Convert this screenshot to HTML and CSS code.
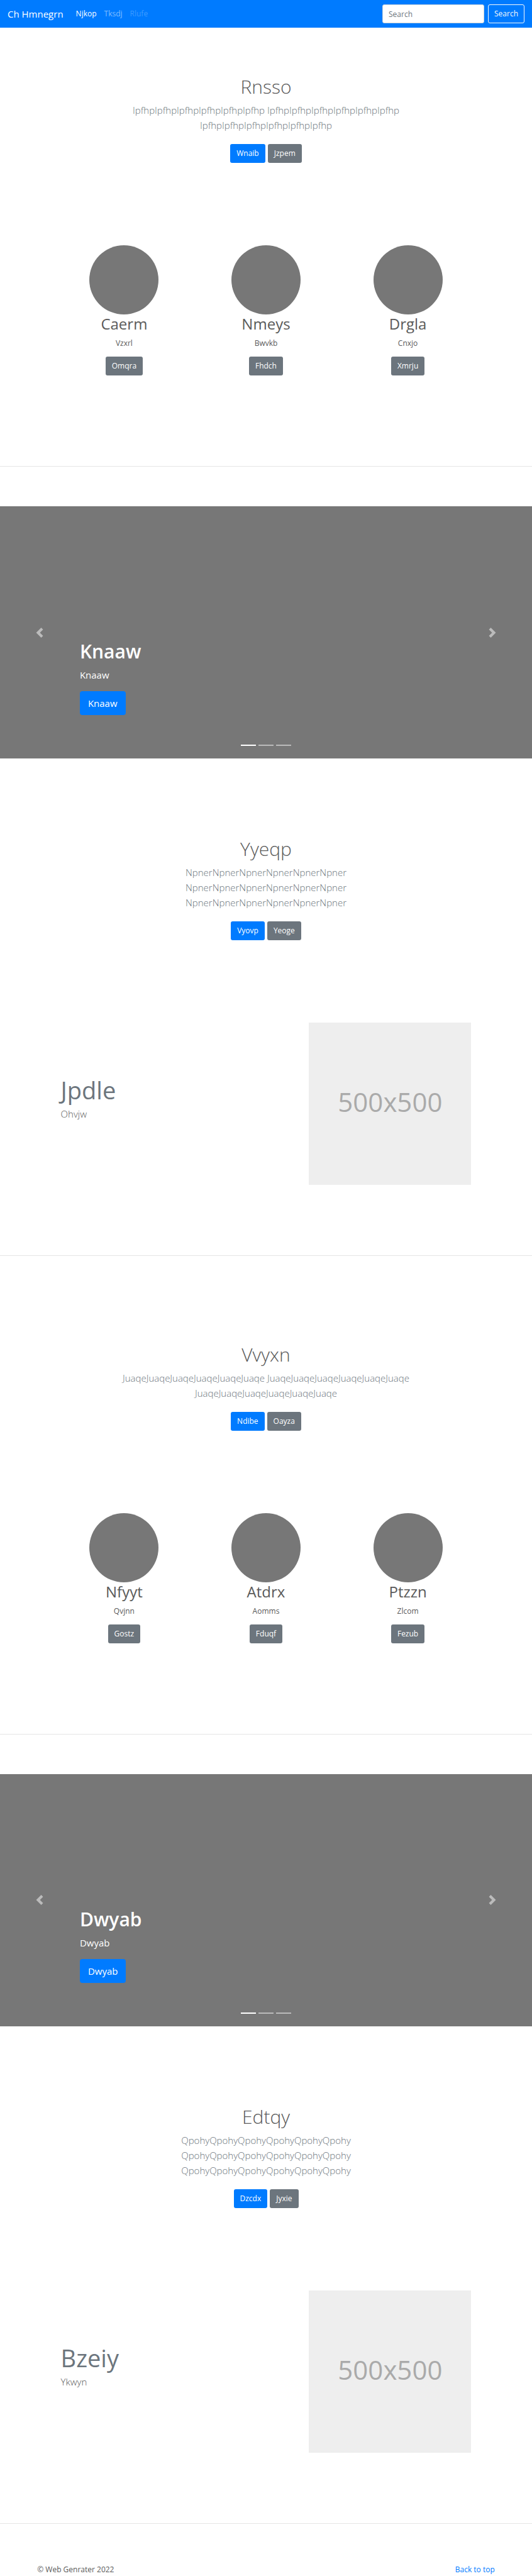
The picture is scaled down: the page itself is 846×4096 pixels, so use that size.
FILE: index.html
```html
<!DOCTYPE html>
<html lang="en">
<head>
<meta charset="utf-8">
<meta name="viewport" content="width=device-width, initial-scale=1">
<title>Ch Hmnegrn</title>
<link rel="stylesheet" href="styles.css">
</head>
<body id="top">
<header class="navbar">
  <a class="brand" href="#">Ch Hmnegrn</a>
  <nav class="nav">
    <a class="nav-link active" href="#">Njkop</a>
    <a class="nav-link" href="#">Tksdj</a>
    <a class="nav-link disabled" href="#">Rlufe</a>
  </nav>
  <form class="search">
    <input class="search-input" type="search" placeholder="Search" aria-label="Search">
    <button class="btn btn-outline" type="button">Search</button>
  </form>
</header>
<main>
  <section class="intro">
    <h1 class="intro-title">Rnsso</h1>
    <p class="lead">IpfhpIpfhpIpfhpIpfhpIpfhpIpfhp IpfhpIpfhpIpfhpIpfhpIpfhpIpfhp IpfhpIpfhpIpfhpIpfhpIpfhpIpfhp</p>
    <div class="actions"><a class="btn btn-primary" href="#">Wnaib</a><a class="btn btn-secondary" href="#">Jzpem</a></div>
  </section>
  <section class="team">
    <article class="member"><div class="avatar"></div><h2 class="member-name">Caerm</h2><p class="member-text">Vzxrl</p><a class="btn btn-secondary" href="#">Omqra</a></article>
    <article class="member"><div class="avatar"></div><h2 class="member-name">Nmeys</h2><p class="member-text">Bwvkb</p><a class="btn btn-secondary" href="#">Fhdch</a></article>
    <article class="member"><div class="avatar"></div><h2 class="member-name">Drgla</h2><p class="member-text">Cnxjo</p><a class="btn btn-secondary" href="#">Xmrju</a></article>
  </section>
  <hr class="divider">
  <section class="carousel">
    <div class="caption">
      <h2 class="caption-title">Knaaw</h2>
      <p class="caption-text">Knaaw</p>
      <a class="btn btn-primary btn-large" href="#">Knaaw</a>
    </div>
    <button class="control control-prev" type="button" aria-label="Previous"><svg class="chevron" viewBox="0 0 8 8"><path d="M5.250 0l-4 4 4 4 1.500-1.500L4.250 4l2.500-2.500L5.250 0z"/></svg></button>
    <button class="control control-next" type="button" aria-label="Next"><svg class="chevron" viewBox="0 0 8 8"><path d="M2.750 0l-1.500 1.500L3.750 4l-2.500 2.500L2.750 8l4-4-4-4z"/></svg></button>
    <div class="indicators"><span class="indicator current"></span><span class="indicator"></span><span class="indicator"></span></div>
  </section>
  <section class="intro after-carousel">
    <h1 class="intro-title">Yyeqp</h1>
    <p class="lead">NpnerNpnerNpnerNpnerNpnerNpner NpnerNpnerNpnerNpnerNpnerNpner NpnerNpnerNpnerNpnerNpnerNpner</p>
    <div class="actions"><a class="btn btn-primary" href="#">Vyovp</a><a class="btn btn-secondary" href="#">Yeoge</a></div>
  </section>
  <section class="feature">
    <div class="feature-copy"><h2 class="feature-title">Jpdle</h2><p class="feature-text">Ohvjw</p></div>
    <div class="feature-media"><div class="placeholder">500x500</div></div>
  </section>
  <hr class="divider">
  <section class="intro">
    <h1 class="intro-title">Vvyxn</h1>
    <p class="lead">JuaqeJuaqeJuaqeJuaqeJuaqeJuaqe JuaqeJuaqeJuaqeJuaqeJuaqeJuaqe JuaqeJuaqeJuaqeJuaqeJuaqeJuaqe</p>
    <div class="actions"><a class="btn btn-primary" href="#">Ndibe</a><a class="btn btn-secondary" href="#">Oayza</a></div>
  </section>
  <section class="team">
    <article class="member"><div class="avatar"></div><h2 class="member-name">Nfyyt</h2><p class="member-text">Qvjnn</p><a class="btn btn-secondary" href="#">Gostz</a></article>
    <article class="member"><div class="avatar"></div><h2 class="member-name">Atdrx</h2><p class="member-text">Aomms</p><a class="btn btn-secondary" href="#">Fduqf</a></article>
    <article class="member"><div class="avatar"></div><h2 class="member-name">Ptzzn</h2><p class="member-text">Zlcom</p><a class="btn btn-secondary" href="#">Fezub</a></article>
  </section>
  <hr class="divider">
  <section class="carousel">
    <div class="caption">
      <h2 class="caption-title">Dwyab</h2>
      <p class="caption-text">Dwyab</p>
      <a class="btn btn-primary btn-large" href="#">Dwyab</a>
    </div>
    <button class="control control-prev" type="button" aria-label="Previous"><svg class="chevron" viewBox="0 0 8 8"><path d="M5.250 0l-4 4 4 4 1.500-1.500L4.250 4l2.500-2.500L5.250 0z"/></svg></button>
    <button class="control control-next" type="button" aria-label="Next"><svg class="chevron" viewBox="0 0 8 8"><path d="M2.750 0l-1.500 1.500L3.750 4l-2.500 2.500L2.750 8l4-4-4-4z"/></svg></button>
    <div class="indicators"><span class="indicator current"></span><span class="indicator"></span><span class="indicator"></span></div>
  </section>
  <section class="intro after-carousel">
    <h1 class="intro-title">Edtqy</h1>
    <p class="lead">QpohyQpohyQpohyQpohyQpohyQpohy QpohyQpohyQpohyQpohyQpohyQpohy QpohyQpohyQpohyQpohyQpohyQpohy</p>
    <div class="actions"><a class="btn btn-primary" href="#">Dzcdx</a><a class="btn btn-secondary" href="#">Jyxie</a></div>
  </section>
  <section class="feature">
    <div class="feature-copy"><h2 class="feature-title">Bzeiy</h2><p class="feature-text">Ykwyn</p></div>
    <div class="feature-media"><div class="placeholder">500x500</div></div>
  </section>
  <hr class="divider">
</main>
<footer class="footer">
  <p class="copyright">© Web Genrater 2022</p>
  <a class="back" href="#top">Back to top</a>
</footer>
</body>
</html>
```
FILE: styles.css
```css
*, *::before, *::after { box-sizing: border-box; }
body {
  margin: 0;
  background: #fff;
  color: #5a5a5a;
  font-family: "Open Sans", "Noto Sans", sans-serif;
  font-size: 12px;
  line-height: 20px;
}
h1, h2, p { margin: 0; }
a { color: #007bff; text-decoration: none; }

.navbar {
  display: flex;
  align-items: center;
  height: 44px;
  padding: 0 12px;
  background: #007bff;
}
.brand { margin-right: 14px; color: #fff; font-size: 15px; }
.nav { display: flex; flex: 1; }
.nav-link { padding: 0 6px; color: rgba(255, 255, 255, .5); }
.nav-link.active { color: #fff; }
.nav-link.disabled { color: rgba(255, 255, 255, .25); }
.search { display: flex; gap: 6px; }
.search-input {
  width: 162px;
  height: 30px;
  padding: 0 9px;
  border: 1px solid #ced4da;
  border-radius: 3px;
  background: #fff;
  font: inherit;
}
.search-input::placeholder { color: #6c757d; opacity: 1; }

.btn {
  display: inline-block;
  height: 30px;
  padding: 0 9px;
  border: 1px solid transparent;
  border-radius: 3px;
  color: #fff;
  font: inherit;
  line-height: 28px;
}
.btn-outline { border-color: #f8f9fa; background: transparent; color: #f8f9fa; }
.btn-primary { background: #007bff; }
.btn-secondary { background: #6c757d; }
.btn-large { height: 38px; padding: 0 12px; border-radius: 4px; font-size: 15px; line-height: 36px; }

.intro {
  max-width: 486px;
  margin: 0 auto;
  padding: 75px 0 131px;
  text-align: center;
}
.after-carousel { padding-top: 125px; }
.intro-title { margin-bottom: 6px; font-size: 30px; font-weight: 300; line-height: 38px; }
.lead { margin-bottom: 18px; color: #6c757d; font-size: 15px; font-weight: 300; line-height: 24px; }
.actions { display: flex; justify-content: center; gap: 4px; }

.team {
  display: grid;
  grid-template-columns: repeat(3, 1fr);
  width: 80%;
  margin: 0 auto;
  padding-bottom: 144px;
  text-align: center;
}
.member { display: flex; flex-direction: column; align-items: center; }
.avatar { width: 110px; height: 110px; border-radius: 50%; background: #777; }
.member-name { margin-bottom: 6px; font-size: 24px; font-weight: 400; line-height: 30px; }
.member-text { margin-bottom: 11px; }

.divider { height: 1px; margin: 0 0 63px; border: 0; background: #e5e5e5; }

.carousel {
  position: relative;
  display: flex;
  align-items: flex-end;
  height: 401px;
  padding: 0 15% 69px;
  background: #777;
}
.caption { color: #fff; }
.caption-title { margin-bottom: 6px; font-size: 30px; font-weight: 600; line-height: 38px; }
.caption-text { margin-bottom: 14px; font-size: 15px; line-height: 24px; }
.control {
  position: absolute;
  top: 0;
  bottom: 0;
  display: flex;
  align-items: center;
  justify-content: center;
  width: 15%;
  padding: 0;
  border: 0;
  background: none;
  opacity: .5;
}
.control-prev { left: 0; }
.control-next { right: 0; }
.chevron { width: 16px; height: 16px; fill: #fff; }
.indicators {
  position: absolute;
  right: 0;
  bottom: 20px;
  left: 0;
  display: flex;
  justify-content: center;
  gap: 4px;
}
.indicator { width: 24px; height: 2px; background: rgba(255, 255, 255, .5); }
.indicator.current { background: #fff; }

.feature {
  display: grid;
  grid-template-columns: 7fr 5fr;
  width: 80%;
  margin: 0 auto;
  padding-bottom: 112px;
}
.feature-copy { padding: 88px 12px 0; }
.feature-title { color: #6c757d; font-size: 38px; font-weight: 400; line-height: 39px; }
.feature-text { margin-top: 6px; font-size: 15px; font-weight: 300; line-height: 24px; }
.feature-media { padding: 0 12px; }
.placeholder {
  display: flex;
  align-items: center;
  justify-content: center;
  aspect-ratio: 1;
  padding-bottom: 6px;
  background: #eee;
  color: #aaa;
  font-size: 42px;
}

.footer { display: flex; justify-content: space-between; padding: 0 7%; }
```
